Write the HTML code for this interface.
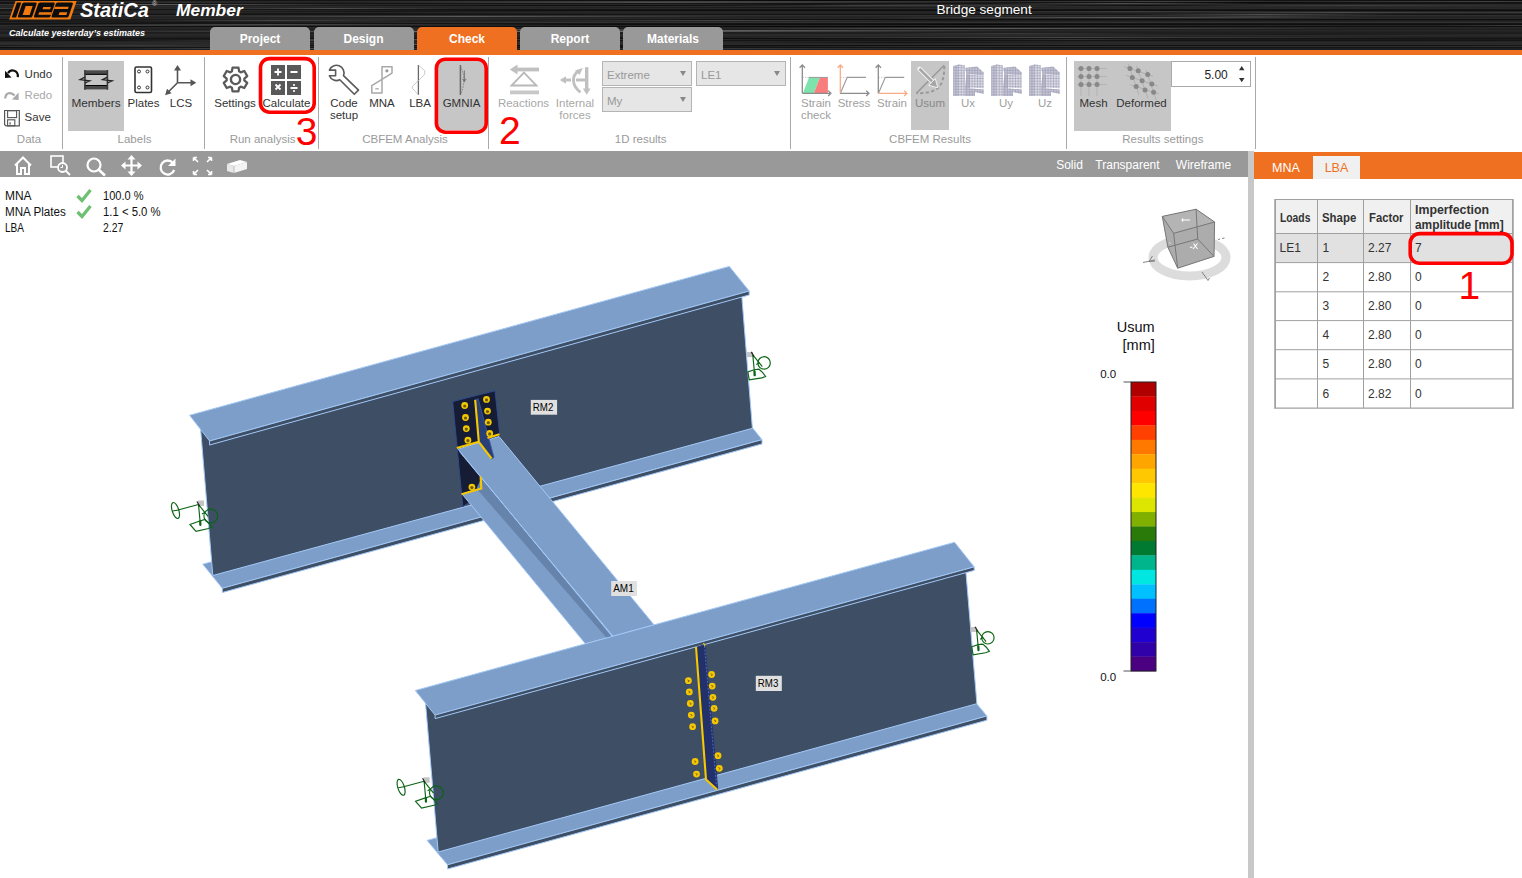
<!DOCTYPE html>
<html><head><meta charset="utf-8">
<style>
*{margin:0;padding:0;box-sizing:border-box}
html,body{width:1522px;height:878px;overflow:hidden;background:#fff;font-family:"Liberation Sans",sans-serif;}
.a{position:absolute;white-space:nowrap}
#hdr{position:absolute;left:0;top:0;width:1522px;height:50px;
 background:
 repeating-linear-gradient(180deg,rgba(255,255,255,0) 0px,rgba(255,255,255,0) 2px,rgba(255,255,255,.08) 3px,rgba(255,255,255,0) 4px,rgba(0,0,0,0) 5px,rgba(0,0,0,.3) 6px,rgba(255,255,255,.05) 7px),
 #1c1c1c;}
#obar{position:absolute;left:0;top:50px;width:1522px;height:5px;background:#f07021}
.tab{position:absolute;top:27px;width:100px;height:23px;background:#999;border-radius:5px 5px 0 0;color:#fff;font-weight:bold;font-size:12px;text-align:center;line-height:24px}
.tab.on{background:#f07021}
#rib{position:absolute;left:0;top:55px;width:1522px;height:96px;background:#fff}
.sep{position:absolute;top:57px;width:1px;height:92px;background:#a0a0a0}
.glbl{position:absolute;top:133px;color:#999;font-size:11.5px;text-align:center}
.btxt{position:absolute;font-size:11.5px;color:#333;text-align:center;line-height:12px}
.dis{color:#a0a0a0}
.hl{position:absolute;background:#c6c6c6}
#vtb{position:absolute;left:0;top:151px;width:1248px;height:26px;background:#999}
#split{position:absolute;left:1248px;top:151px;width:6px;height:727px;background:#c8c8c8}
#rhdr{position:absolute;left:1254px;top:152px;width:268px;height:27px;background:#f07021}
.combo{position:absolute;height:25px;background:#e6e6e6;border:1px solid #b4b4b4;color:#999;font-size:11.5px;line-height:26px;padding-left:4px}
.combo:after{content:"";position:absolute;right:5px;top:9px;border-left:3.5px solid transparent;border-right:3.5px solid transparent;border-top:5px solid #888}
.stat{position:absolute;font-size:12px;color:#111;line-height:16px}
.red{position:absolute;border:3px solid #f00;border-radius:10px}
.num{position:absolute;color:#f00;font-size:34px;line-height:34px}
table{border-collapse:collapse}
</style></head><body>
<div id="hdr"></div>
<svg class="a" style="left:0;top:0" width="1522" height="50" viewBox="0 0 1522 50"><defs><linearGradient id="sl"><stop offset="0" stop-color="#fff" stop-opacity="0"/><stop offset="0.5" stop-color="#fff" stop-opacity="1"/><stop offset="1" stop-color="#fff" stop-opacity="0"/></linearGradient><linearGradient id="sd"><stop offset="0" stop-color="#000" stop-opacity="0"/><stop offset="0.5" stop-color="#000" stop-opacity="1"/><stop offset="1" stop-color="#000" stop-opacity="0"/></linearGradient></defs><rect x="0" y="0" width="1522" height="1" fill="rgb(20,20,20)"/><rect x="0" y="1" width="1522" height="1" fill="rgb(40,40,40)"/><rect x="0" y="2" width="1522" height="1" fill="rgb(20,20,20)"/><rect x="0" y="3" width="1522" height="1" fill="rgb(20,20,20)"/><rect x="0" y="4" width="1522" height="1" fill="rgb(40,40,40)"/><rect x="0" y="5" width="1522" height="1" fill="rgb(36,36,36)"/><rect x="0" y="6" width="1522" height="1" fill="rgb(42,42,42)"/><rect x="0" y="7" width="1522" height="1" fill="rgb(38,38,38)"/><rect x="0" y="8" width="1522" height="1" fill="rgb(40,40,40)"/><rect x="0" y="9" width="1522" height="1" fill="rgb(20,20,20)"/><rect x="0" y="10" width="1522" height="1" fill="rgb(15,15,15)"/><rect x="0" y="11" width="1522" height="1" fill="rgb(36,36,36)"/><rect x="0" y="12" width="1522" height="1" fill="rgb(38,38,38)"/><rect x="0" y="13" width="1522" height="1" fill="rgb(34,34,34)"/><rect x="0" y="14" width="1522" height="1" fill="rgb(20,20,20)"/><rect x="0" y="15" width="1522" height="1" fill="rgb(46,46,46)"/><rect x="0" y="16" width="1522" height="1" fill="rgb(38,38,38)"/><rect x="0" y="17" width="1522" height="1" fill="rgb(34,34,34)"/><rect x="0" y="18" width="1522" height="1" fill="rgb(40,40,40)"/><rect x="0" y="19" width="1522" height="1" fill="rgb(15,15,15)"/><rect x="0" y="20" width="1522" height="1" fill="rgb(30,30,30)"/><rect x="0" y="21" width="1522" height="1" fill="rgb(36,36,36)"/><rect x="0" y="22" width="1522" height="1" fill="rgb(50,50,50)"/><rect x="0" y="23" width="1522" height="1" fill="rgb(20,20,20)"/><rect x="0" y="24" width="1522" height="1" fill="rgb(15,15,15)"/><rect x="0" y="25" width="1522" height="1" fill="rgb(36,36,36)"/><rect x="0" y="26" width="1522" height="1" fill="rgb(15,15,15)"/><rect x="0" y="27" width="1522" height="1" fill="rgb(38,38,38)"/><rect x="0" y="28" width="1522" height="1" fill="rgb(36,36,36)"/><rect x="0" y="29" width="1522" height="1" fill="rgb(30,30,30)"/><rect x="0" y="30" width="1522" height="1" fill="rgb(40,40,40)"/><rect x="0" y="31" width="1522" height="1" fill="rgb(34,34,34)"/><rect x="0" y="32" width="1522" height="1" fill="rgb(30,30,30)"/><rect x="0" y="33" width="1522" height="1" fill="rgb(30,30,30)"/><rect x="0" y="34" width="1522" height="1" fill="rgb(42,42,42)"/><rect x="0" y="35" width="1522" height="1" fill="rgb(42,42,42)"/><rect x="0" y="36" width="1522" height="1" fill="rgb(36,36,36)"/><rect x="0" y="37" width="1522" height="1" fill="rgb(30,30,30)"/><rect x="0" y="38" width="1522" height="1" fill="rgb(20,20,20)"/><rect x="0" y="39" width="1522" height="1" fill="rgb(26,26,26)"/><rect x="0" y="40" width="1522" height="1" fill="rgb(20,20,20)"/><rect x="0" y="41" width="1522" height="1" fill="rgb(36,36,36)"/><rect x="0" y="42" width="1522" height="1" fill="rgb(42,42,42)"/><rect x="0" y="43" width="1522" height="1" fill="rgb(40,40,40)"/><rect x="0" y="44" width="1522" height="1" fill="rgb(42,42,42)"/><rect x="0" y="45" width="1522" height="1" fill="rgb(15,15,15)"/><rect x="0" y="46" width="1522" height="1" fill="rgb(46,46,46)"/><rect x="0" y="47" width="1522" height="1" fill="rgb(20,20,20)"/><rect x="0" y="48" width="1522" height="1" fill="rgb(30,30,30)"/><rect x="0" y="49" width="1522" height="1" fill="rgb(15,15,15)"/><rect x="636" y="5" width="434" height="1" fill="url(#sl)" opacity="0.25"/><rect x="1149" y="5" width="410" height="1" fill="url(#sl)" opacity="0.12"/><rect x="291" y="32" width="180" height="1" fill="url(#sl)" opacity="0.12"/><rect x="-80" y="25" width="447" height="1" fill="url(#sl)" opacity="0.12"/><rect x="-299" y="43" width="368" height="1" fill="url(#sl)" opacity="0.12"/><rect x="468" y="30" width="556" height="1" fill="url(#sl)" opacity="0.25"/><rect x="106" y="40" width="426" height="1" fill="url(#sl)" opacity="0.18"/><rect x="-269" y="21" width="569" height="1" fill="url(#sd)" opacity="0.4"/><rect x="204" y="8" width="253" height="1" fill="url(#sl)" opacity="0.18"/><rect x="63" y="31" width="722" height="1" fill="url(#sl)" opacity="0.25"/><rect x="1198" y="12" width="284" height="1" fill="url(#sl)" opacity="0.18"/><rect x="508" y="7" width="580" height="1" fill="url(#sd)" opacity="0.4"/><rect x="1470" y="17" width="756" height="1" fill="url(#sl)" opacity="0.12"/><rect x="83" y="13" width="553" height="1" fill="url(#sd)" opacity="0.4"/><rect x="-1" y="2" width="368" height="1" fill="url(#sl)" opacity="0.12"/><rect x="373" y="39" width="453" height="1" fill="url(#sl)" opacity="0.12"/><rect x="127" y="5" width="746" height="1" fill="url(#sd)" opacity="0.4"/><rect x="455" y="38" width="530" height="1" fill="url(#sd)" opacity="0.4"/><rect x="690" y="37" width="738" height="1" fill="url(#sl)" opacity="0.18"/><rect x="984" y="11" width="307" height="1" fill="url(#sl)" opacity="0.12"/><rect x="210" y="39" width="344" height="1" fill="url(#sl)" opacity="0.25"/><rect x="102" y="35" width="547" height="1" fill="url(#sd)" opacity="0.4"/><rect x="-203" y="26" width="256" height="1" fill="url(#sl)" opacity="0.25"/><rect x="188" y="16" width="551" height="1" fill="url(#sl)" opacity="0.25"/><rect x="300" y="31" width="682" height="1" fill="url(#sl)" opacity="0.25"/><rect x="-42" y="4" width="383" height="1" fill="url(#sl)" opacity="0.25"/><rect x="958" y="39" width="225" height="1" fill="url(#sl)" opacity="0.12"/><rect x="-267" y="47" width="220" height="1" fill="url(#sl)" opacity="0.18"/><rect x="-177" y="15" width="197" height="1" fill="url(#sl)" opacity="0.18"/><rect x="871" y="33" width="284" height="1" fill="url(#sl)" opacity="0.12"/><rect x="377" y="28" width="684" height="1" fill="url(#sd)" opacity="0.4"/><rect x="-229" y="37" width="168" height="1" fill="url(#sl)" opacity="0.18"/><rect x="338" y="44" width="184" height="1" fill="url(#sl)" opacity="0.25"/><rect x="687" y="4" width="218" height="1" fill="url(#sd)" opacity="0.6"/><rect x="-152" y="8" width="227" height="1" fill="url(#sl)" opacity="0.18"/><rect x="-209" y="47" width="282" height="1" fill="url(#sd)" opacity="0.6"/><rect x="-127" y="22" width="634" height="1" fill="url(#sd)" opacity="0.6"/><rect x="1468" y="1" width="661" height="1" fill="url(#sd)" opacity="0.6"/><rect x="893" y="24" width="162" height="1" fill="url(#sd)" opacity="0.4"/><rect x="1009" y="5" width="268" height="1" fill="url(#sd)" opacity="0.6"/><rect x="376" y="46" width="547" height="1" fill="url(#sd)" opacity="0.6"/><rect x="647" y="28" width="704" height="1" fill="url(#sl)" opacity="0.25"/><rect x="335" y="1" width="765" height="1" fill="url(#sl)" opacity="0.12"/><rect x="1130" y="14" width="265" height="1" fill="url(#sl)" opacity="0.25"/><rect x="695" y="42" width="411" height="1" fill="url(#sd)" opacity="0.6"/><rect x="-7" y="19" width="776" height="1" fill="url(#sl)" opacity="0.12"/><rect x="401" y="48" width="602" height="1" fill="url(#sl)" opacity="0.12"/><rect x="528" y="20" width="406" height="1" fill="url(#sl)" opacity="0.18"/><rect x="110" y="48" width="369" height="1" fill="url(#sl)" opacity="0.25"/><rect x="129" y="20" width="289" height="1" fill="url(#sl)" opacity="0.18"/><rect x="1156" y="2" width="215" height="1" fill="url(#sd)" opacity="0.6"/><rect x="-69" y="10" width="611" height="1" fill="url(#sl)" opacity="0.12"/><rect x="483" y="26" width="790" height="1" fill="url(#sd)" opacity="0.6"/><rect x="1418" y="45" width="789" height="1" fill="url(#sl)" opacity="0.12"/><rect x="269" y="2" width="772" height="1" fill="url(#sl)" opacity="0.25"/><rect x="868" y="17" width="512" height="1" fill="url(#sl)" opacity="0.25"/><rect x="1012" y="1" width="289" height="1" fill="url(#sl)" opacity="0.12"/><rect x="1275" y="1" width="422" height="1" fill="url(#sl)" opacity="0.12"/><rect x="988" y="3" width="268" height="1" fill="url(#sl)" opacity="0.25"/><rect x="1041" y="34" width="527" height="1" fill="url(#sd)" opacity="0.4"/><rect x="1387" y="12" width="636" height="1" fill="url(#sl)" opacity="0.25"/><rect x="1246" y="0" width="633" height="1" fill="url(#sd)" opacity="0.4"/><rect x="163" y="11" width="428" height="1" fill="url(#sd)" opacity="0.4"/><rect x="1438" y="25" width="379" height="1" fill="url(#sl)" opacity="0.25"/><rect x="-34" y="24" width="611" height="1" fill="url(#sl)" opacity="0.25"/><rect x="471" y="0" width="713" height="1" fill="url(#sd)" opacity="0.6"/><rect x="368" y="29" width="359" height="1" fill="url(#sl)" opacity="0.25"/><rect x="-48" y="45" width="368" height="1" fill="url(#sl)" opacity="0.18"/><rect x="334" y="5" width="699" height="1" fill="url(#sd)" opacity="0.6"/><rect x="1171" y="16" width="166" height="1" fill="url(#sl)" opacity="0.12"/><rect x="0" y="49" width="1522" height="1" fill="#1a2026"/></svg>
<div id="obar"></div>
<div class="tab" style="left:210px">Project</div>
<div class="tab" style="left:313.5px">Design</div>
<div class="tab on" style="left:417px">Check</div>
<div class="tab" style="left:520px">Report</div>
<div class="tab" style="left:623px">Materials</div>
<div class="a" style="left:936.5px;top:2px;color:#fff;font-size:13.6px">Bridge segment</div>

<div id="rib"></div>
<div id="vtb"></div>
<div id="split"></div>
<div id="rhdr"></div>
<svg class="a" style="left:0;top:0" width="1248" height="878" viewBox="0 0 1248 878"><polygon points="202.8,564.2 742.6,415.5 762.0,439.7 222.3,588.3" fill="#7d9ec9" stroke="#a3c8f5" stroke-width="1"/><polygon points="222.3,588.3 762.0,439.7 762.0,443.9 222.3,592.5" fill="#3e4e65" stroke="#a3c8f5" stroke-width="1"/><polygon points="200.5,428.0 740.5,280.0 752.4,428.3 212.8,575.5" fill="#3e4e65" stroke="#a3c8f5" stroke-width="1"/><polygon points="452.7,401.5 495.0,390.8 500.0,437.0 505.0,480.0 462.8,506.5" fill="#151c34" stroke="#2e4a8a" stroke-width="1"/><polygon points="462.1,494.0 503.0,481.3 627.2,632.3 585.4,643.8" fill="#7d9ec9" stroke="#a3c8f5" stroke-width="1"/><polygon points="476.5,488.5 481.5,477.6 612.2,636.4 606.7,637.9" fill="#6583ab"/><polygon points="458.1,449.2 499.0,436.5 654.1,624.9 612.2,636.4" fill="#7d9ec9" stroke="#a3c8f5" stroke-width="1"/><path d="M459.6,451.7 L613.1733176136148,636.399080900542" stroke="#a3c8f5" stroke-width="1"/><polygon points="474.8,399.5 478.2,398.8 494.0,457.5 491.0,459.0 478.9,442.0" fill="#2a3f75" stroke="#3b5aa0" stroke-width="0.8"/><path d="M456.8,448 L478.8,441.8 L475.2,400 M478.8,441.8 L491.5,458.5 M487.5,438 L499.5,434.2 M480.6,476.5 L481.3,488.5 L461.5,494.2" fill="none" stroke="#f5c800" stroke-width="2.1"/><circle cx="464.7" cy="405.5" r="3.4" fill="#f5c800"/><circle cx="464.7" cy="406.0" r="1.6" fill="#6e5a00"/><circle cx="465.5" cy="417.5" r="3.4" fill="#f5c800"/><circle cx="465.5" cy="418.0" r="1.6" fill="#6e5a00"/><circle cx="466.3" cy="428.6" r="3.4" fill="#f5c800"/><circle cx="466.3" cy="429.1" r="1.6" fill="#6e5a00"/><circle cx="467.9" cy="440.2" r="3.4" fill="#f5c800"/><circle cx="467.9" cy="440.7" r="1.6" fill="#6e5a00"/><circle cx="486.5" cy="399.4" r="3.4" fill="#f5c800"/><circle cx="486.5" cy="399.9" r="1.6" fill="#6e5a00"/><circle cx="487.5" cy="411.1" r="3.4" fill="#f5c800"/><circle cx="487.5" cy="411.6" r="1.6" fill="#6e5a00"/><circle cx="488.3" cy="422.2" r="3.4" fill="#f5c800"/><circle cx="488.3" cy="422.7" r="1.6" fill="#6e5a00"/><circle cx="489.7" cy="433.4" r="3.4" fill="#f5c800"/><circle cx="489.7" cy="433.9" r="1.6" fill="#6e5a00"/><circle cx="471.9" cy="487.1" r="3.4" fill="#f5c800"/><circle cx="471.9" cy="487.6" r="1.6" fill="#6e5a00"/><polygon points="189.6,415.3 729.3,266.4 749.2,291.0 209.6,441.0" fill="#7d9ec9" stroke="#a3c8f5" stroke-width="1"/><polygon points="209.6,441.0 749.2,291.0 749.2,295.0 209.6,445.0" fill="#3e4e65" stroke="#a3c8f5" stroke-width="1"/><polygon points="427.1,840.4 966.9,692.0 986.9,716.0 447.5,864.8" fill="#7d9ec9" stroke="#a3c8f5" stroke-width="1"/><polygon points="447.5,864.8 986.9,716.0 986.9,720.2 447.5,869.0" fill="#3e4e65" stroke="#a3c8f5" stroke-width="1"/><polygon points="425.5,703.0 964.5,555.0 976.9,703.7 438.2,852.0" fill="#3e4e65" stroke="#a3c8f5" stroke-width="1"/><polygon points="415.3,690.5 954.6,542.3 974.2,566.9 435.1,715.1" fill="#7d9ec9" stroke="#a3c8f5" stroke-width="1"/><polygon points="435.1,715.1 974.2,566.9 974.2,570.4 435.1,718.6" fill="#3e4e65" stroke="#a3c8f5" stroke-width="1"/><polygon points="695.8,647.5 704.8,644.5 717.8,789.0 706.3,779.0" fill="#22316a" stroke="#22316a" stroke-width="0.8"/><path d="M704.5,646 L716.5,786" stroke="#4a6ac0" stroke-width="1" stroke-dasharray="2,1.5"/><path d="M696,647 L706,779.5 L717,789.5" fill="none" stroke="#f5c800" stroke-width="2.1"/><path d="M703.5,643 L705,646" stroke="#f5c800" stroke-width="1.2"/><circle cx="688.4" cy="680.7" r="3.4" fill="#f5c800"/><path d="M687.4,679.9000000000001 L689.4,680.9000000000001 L687.9,681.9000000000001" fill="none" stroke="#8a6e00" stroke-width="1"/><circle cx="689.3" cy="691.9" r="3.4" fill="#f5c800"/><path d="M688.3,691.1 L690.3,692.1 L688.8,693.1" fill="none" stroke="#8a6e00" stroke-width="1"/><circle cx="690.3" cy="703.5" r="3.4" fill="#f5c800"/><path d="M689.3,702.7 L691.3,703.7 L689.8,704.7" fill="none" stroke="#8a6e00" stroke-width="1"/><circle cx="691.3" cy="715.1" r="3.4" fill="#f5c800"/><path d="M690.3,714.3000000000001 L692.3,715.3000000000001 L690.8,716.3000000000001" fill="none" stroke="#8a6e00" stroke-width="1"/><circle cx="692.6" cy="726.7" r="3.4" fill="#f5c800"/><path d="M691.6,725.9000000000001 L693.6,726.9000000000001 L692.1,727.9000000000001" fill="none" stroke="#8a6e00" stroke-width="1"/><circle cx="695.1" cy="761.5" r="3.4" fill="#f5c800"/><path d="M694.1,760.7 L696.1,761.7 L694.6,762.7" fill="none" stroke="#8a6e00" stroke-width="1"/><circle cx="696.5" cy="774.1" r="3.4" fill="#f5c800"/><path d="M695.5,773.3000000000001 L697.5,774.3000000000001 L696.0,775.3000000000001" fill="none" stroke="#8a6e00" stroke-width="1"/><circle cx="711.6" cy="674.5" r="3.4" fill="#f5c800"/><path d="M710.6,673.7 L712.6,674.7 L711.1,675.7" fill="none" stroke="#8a6e00" stroke-width="1"/><circle cx="712.2" cy="686.1" r="3.4" fill="#f5c800"/><path d="M711.2,685.3000000000001 L713.2,686.3000000000001 L711.7,687.3000000000001" fill="none" stroke="#8a6e00" stroke-width="1"/><circle cx="712.9" cy="697.3" r="3.4" fill="#f5c800"/><path d="M711.9,696.5 L713.9,697.5 L712.4,698.5" fill="none" stroke="#8a6e00" stroke-width="1"/><circle cx="714.1" cy="708.3" r="3.4" fill="#f5c800"/><path d="M713.1,707.5 L715.1,708.5 L713.6,709.5" fill="none" stroke="#8a6e00" stroke-width="1"/><circle cx="715.1" cy="720.9" r="3.4" fill="#f5c800"/><path d="M714.1,720.1 L716.1,721.1 L714.6,722.1" fill="none" stroke="#8a6e00" stroke-width="1"/><circle cx="718" cy="755.7" r="3.4" fill="#f5c800"/><path d="M717,754.9000000000001 L719,755.9000000000001 L717.5,756.9000000000001" fill="none" stroke="#8a6e00" stroke-width="1"/><circle cx="719.3" cy="768.3" r="3.4" fill="#f5c800"/><path d="M718.3,767.5 L720.3,768.5 L718.8,769.5" fill="none" stroke="#8a6e00" stroke-width="1"/><rect x="530.8" y="399.9" width="26.300000000000068" height="14.800000000000011" fill="#e0e0e0"/><text x="532.8" y="411.09999999999997" font-size="10.8" textLength="20.5" lengthAdjust="spacingAndGlyphs" fill="#000" font-family="Liberation Sans">RM2</text><rect x="611.2" y="581" width="25.799999999999955" height="15" fill="#e0e0e0"/><text x="613.2" y="592.4" font-size="10.8" textLength="20.5" lengthAdjust="spacingAndGlyphs" fill="#000" font-family="Liberation Sans">AM1</text><rect x="755.8" y="675.8" width="26.0" height="15.200000000000045" fill="#e0e0e0"/><text x="757.8" y="687.4" font-size="10.8" textLength="20.5" lengthAdjust="spacingAndGlyphs" fill="#000" font-family="Liberation Sans">RM3</text><rect x="198.0" y="500.5" width="6" height="5.5" fill="#c4c4c4"/><g transform="translate(198.5,504.5)" fill="none" stroke="#0b6414" stroke-width="1.15"><path d="M0,0 L2,21.3 M0,0 L9.5,11.8 M3.5,9.5 L7,7.5"/><path d="M1.7,16 L1.9,21" stroke-width="2.2"/><circle cx="12.3" cy="11.5" r="6.9"/><path d="M-8.5,20 L-2.5,26.8 L10,24 L13.5,22.5 L10,18.5 L6.5,15 L0.5,16.8 Z"/><path d="M0,0 L-20.5,5.5"/><ellipse cx="-23" cy="6" rx="3.3" ry="8.3" transform="rotate(-18 -23 6)"/><path d="M-26,6.5 L-20,5.5"/></g><path d="M197.0,501.5 L199.5,506.0" stroke="#222" stroke-width="1.2"/><rect x="746.8" y="352.09999999999997" width="6" height="5" fill="#c4c4c4"/><g transform="translate(752.8,354.9)" fill="none" stroke="#0b6414" stroke-width="1.15"><path d="M0,0 L2,21.3 M0,0 L9.5,11.8 M3.5,9.5 L7,7.5"/><path d="M1.7,16 L1.9,21" stroke-width="2.2"/><circle cx="11.3" cy="8" r="6.2"/><path d="M-5,17 L-3.5,25 L9,23 L12.8,21.5 L9.7,17.4 L6.2,14.3 L1.5,14.8 Z"/></g><path d="M751.3,351.9 L753.8,356.4" stroke="#222" stroke-width="1.2"/><rect x="423.6" y="777.3" width="6" height="5.5" fill="#c4c4c4"/><g transform="translate(424.1,781.3)" fill="none" stroke="#0b6414" stroke-width="1.15"><path d="M0,0 L2,21.3 M0,0 L9.5,11.8 M3.5,9.5 L7,7.5"/><path d="M1.7,16 L1.9,21" stroke-width="2.2"/><circle cx="12.3" cy="11.5" r="6.9"/><path d="M-8.5,20 L-2.5,26.8 L10,24 L13.5,22.5 L10,18.5 L6.5,15 L0.5,16.8 Z"/><path d="M0,0 L-20.5,5.5"/><ellipse cx="-23" cy="6" rx="3.3" ry="8.3" transform="rotate(-18 -23 6)"/><path d="M-26,6.5 L-20,5.5"/></g><path d="M422.6,778.3 L425.1,782.8" stroke="#222" stroke-width="1.2"/><rect x="970.6" y="627.0" width="6" height="5" fill="#c4c4c4"/><g transform="translate(976.6,629.8)" fill="none" stroke="#0b6414" stroke-width="1.15"><path d="M0,0 L2,21.3 M0,0 L9.5,11.8 M3.5,9.5 L7,7.5"/><path d="M1.7,16 L1.9,21" stroke-width="2.2"/><circle cx="11.3" cy="8" r="6.2"/><path d="M-5,17 L-3.5,25 L9,23 L12.8,21.5 L9.7,17.4 L6.2,14.3 L1.5,14.8 Z"/></g><path d="M975.1,626.8 L977.6,631.3" stroke="#222" stroke-width="1.2"/></svg>
<div class="a" style="left:62px;top:57px;width:1px;height:92px;background:#a9a9a9"></div><div class="a" style="left:204px;top:57px;width:1px;height:92px;background:#a9a9a9"></div><div class="a" style="left:318px;top:57px;width:1px;height:92px;background:#a9a9a9"></div><div class="a" style="left:488px;top:57px;width:1px;height:92px;background:#a9a9a9"></div><div class="a" style="left:790px;top:57px;width:1px;height:92px;background:#a9a9a9"></div><div class="a" style="left:1066px;top:57px;width:1px;height:92px;background:#a9a9a9"></div><div class="a" style="left:1255px;top:57px;width:1px;height:92px;background:#a9a9a9"></div><div class="a" style="left:68px;top:61px;width:56px;height:70px;background:#c6c6c6"></div><div class="a" style="left:438px;top:60px;width:47px;height:70px;background:#c6c6c6"></div><div class="a" style="left:911px;top:61px;width:38px;height:69px;background:#c6c6c6"></div><div class="a" style="left:1074px;top:61px;width:97px;height:70px;background:#c6c6c6"></div><div class="a" style="left:-71.0px;width:200px;text-align:center;top:134.3px;font-size:11.5px;line-height:11.5px;color:#9a9a9a;">Data</div><div class="a" style="left:34.5px;width:200px;text-align:center;top:134.3px;font-size:11.5px;line-height:11.5px;color:#9a9a9a;">Labels</div><div class="a" style="left:162.6px;width:200px;text-align:center;top:134.3px;font-size:11.5px;line-height:11.5px;color:#9a9a9a;">Run analysis</div><div class="a" style="left:305.0px;width:200px;text-align:center;top:134.3px;font-size:11.5px;line-height:11.5px;color:#9a9a9a;">CBFEM Analysis</div><div class="a" style="left:540.7px;width:200px;text-align:center;top:134.3px;font-size:11.5px;line-height:11.5px;color:#9a9a9a;">1D results</div><div class="a" style="left:830.0px;width:200px;text-align:center;top:134.3px;font-size:11.5px;line-height:11.5px;color:#9a9a9a;">CBFEM Results</div><div class="a" style="left:1062.8px;width:200px;text-align:center;top:134.3px;font-size:11.5px;line-height:11.5px;color:#9a9a9a;">Results settings</div><div class="a" style="left:24.6px;top:68.5px;font-size:11.5px;line-height:11.5px;color:#333;">Undo</div><div class="a" style="left:24.6px;top:89.9px;font-size:11.5px;line-height:11.5px;color:#a8a8a8;">Redo</div><div class="a" style="left:24.6px;top:112.2px;font-size:11.5px;line-height:11.5px;color:#333;">Save</div><svg class="a" style="left:0px;top:62px;overflow:visible" width="24" height="68" viewBox="0 0 24 68" ><path d="M17.8,15.2 C18.5,8 11,6.5 8,11.2" fill="none" stroke="#111" stroke-width="2.2"/><path d="M5,70.8 L11.6,77.6 L5,78 Z" fill="#111" transform="translate(0,-62)"/><path d="M5.2,36.5 C5.5,30.5 11,29.5 14.5,33.5" fill="none" stroke="#a8a8a8" stroke-width="2.2"/><path d="M18.6,30.5 L12,37.5 L18.6,38 Z" fill="#a8a8a8"/><path d="M4.6,48.5 H19.3 V63.8 H6 L4.6,62.4 Z" fill="none" stroke="#555" stroke-width="1.2"/><rect x="7.6" y="48.8" width="9" height="6.8" fill="none" stroke="#555" stroke-width="1.1"/><rect x="7.6" y="57.8" width="7.2" height="6" fill="none" stroke="#555" stroke-width="1.1"/><rect x="9.4" y="60.2" width="1.4" height="2.4" fill="#777"/></svg><div class="a" style="left:-4.0px;width:200px;text-align:center;top:98.0px;font-size:11.8px;line-height:11.8px;color:#333;">Members</div><div class="a" style="left:43.5px;width:200px;text-align:center;top:98.3px;font-size:11.5px;line-height:11.5px;color:#333;">Plates</div><div class="a" style="left:81.0px;width:200px;text-align:center;top:98.3px;font-size:11.5px;line-height:11.5px;color:#333;">LCS</div><svg class="a" style="left:76px;top:64px;overflow:visible" width="40" height="30" viewBox="0 0 40 30" ><rect x="8.4" y="6.3" width="23.4" height="4.5" fill="#4a4a4a"/><rect x="8.4" y="9.8" width="23.4" height="1" fill="#000"/><rect x="8.4" y="21" width="23.4" height="4.4" fill="#4a4a4a"/><rect x="8.4" y="21" width="23.4" height="1" fill="#000"/><rect x="8.2" y="6" width="1.6" height="19.7" fill="#3a3a3a"/><rect x="30.6" y="6" width="1.6" height="19.7" fill="#3a3a3a"/><path d="M9,13.2 L4.2,15.6 L13.8,16.8 L9,19 M31.4,13.2 L26.6,15.6 L36.2,16.8 L31.4,19" fill="none" stroke="#222" stroke-width="1.3" stroke-linejoin="miter"/></svg><svg class="a" style="left:134px;top:66px;overflow:visible" width="19" height="28" viewBox="0 0 19 28" ><rect x="1" y="1" width="16.5" height="25.5" rx="1.5" fill="none" stroke="#333" stroke-width="1.6"/><circle cx="5" cy="5.5" r="1.5" fill="none" stroke="#333" stroke-width="1"/><circle cx="13.5" cy="5.5" r="1.5" fill="none" stroke="#333" stroke-width="1"/><circle cx="5" cy="21.5" r="1.5" fill="none" stroke="#333" stroke-width="1"/><circle cx="13.5" cy="21.5" r="1.5" fill="none" stroke="#333" stroke-width="1"/></svg><svg class="a" style="left:164px;top:62.8px;overflow:visible" width="34" height="34" viewBox="0 0 34 34" ><path d="M13.5,19.8 V6 M13.5,19.8 H28 M13.5,19.8 L4.5,28.8" stroke="#555" stroke-width="1.6" fill="none"/><path d="M13.5,1.9 L10,7.5 H17 Z M32.3,19.8 L26.5,16.3 V23.3 Z M1.1,32.2 L3,25.8 L7.5,30.3 Z" fill="#555"/></svg><div class="a" style="left:135.0px;width:200px;text-align:center;top:98.3px;font-size:11.5px;line-height:11.5px;color:#333;">Settings</div><div class="a" style="left:186.5px;width:200px;text-align:center;top:98.3px;font-size:11.5px;line-height:11.5px;color:#333;">Calculate</div><svg class="a" style="left:221.5px;top:66.3px;overflow:visible" width="27" height="27" viewBox="0 0 27 27" ><path d="M9.88,5.37 L10.55,1.66 L16.45,1.66 L17.12,5.37 L18.73,6.30 L22.28,5.03 L25.23,10.14 L22.35,12.57 L22.35,14.43 L25.23,16.86 L22.28,21.97 L18.73,20.70 L17.12,21.63 L16.45,25.34 L10.55,25.34 L9.88,21.63 L8.27,20.70 L4.72,21.97 L1.77,16.86 L4.65,14.43 L4.65,12.57 L1.77,10.14 L4.72,5.03 L8.27,6.30 Z" fill="none" stroke="#5a5a5a" stroke-width="2.3" stroke-linejoin="round"/><circle cx="13.5" cy="13.5" r="4.6" fill="none" stroke="#5a5a5a" stroke-width="2.4"/></svg><svg class="a" style="left:271px;top:65px;overflow:visible" width="30" height="30" viewBox="0 0 30 30" ><rect x="0" y="0" width="14" height="14" fill="#595959"/><rect x="16" y="0" width="14" height="14" fill="#595959"/><rect x="0" y="16" width="14" height="14" fill="#595959"/><rect x="16" y="16" width="14" height="14" fill="#595959"/><path d="M3.5,7 H10.5 M7,3.5 V10.5 M19.5,7 H26.5 M4.5,19.5 L9.5,24.5 M9.5,19.5 L4.5,24.5 M19.5,23 H26.5" stroke="#fff" stroke-width="1.8"/><circle cx="23" cy="20" r="1.1" fill="#fff"/><circle cx="23" cy="26" r="1.1" fill="#fff"/></svg><div class="a" style="left:244.0px;width:200px;text-align:center;top:98.3px;font-size:11.5px;line-height:11.5px;color:#333;">Code</div><div class="a" style="left:244.0px;width:200px;text-align:center;top:110.3px;font-size:11.5px;line-height:11.5px;color:#333;">setup</div><div class="a" style="left:282.0px;width:200px;text-align:center;top:98.3px;font-size:11.5px;line-height:11.5px;color:#333;">MNA</div><div class="a" style="left:320.0px;width:200px;text-align:center;top:98.3px;font-size:11.5px;line-height:11.5px;color:#333;">LBA</div><div class="a" style="left:361.5px;width:200px;text-align:center;top:98.3px;font-size:11.5px;line-height:11.5px;color:#333;">GMNIA</div><svg class="a" style="left:325px;top:60px;overflow:visible" width="70" height="37" viewBox="0 0 70 37" ><path d="M4.4,10.1 L10.6,10.1 L10.6,15.8 L4.4,15.8 A7.4,7.4 0 0 0 14.8,19.7 L29.3,34.3 L33.5,30.1 L18.5,15.6 A7.4,7.4 0 0 0 4.4,10.1 Z" fill="none" stroke="#5a5a5a" stroke-width="1.6" stroke-linejoin="round"/><path d="M57,6.7 H67 V13.1 L46.8,25.6 V33 H57 Z" fill="none" stroke="#a8a8a8" stroke-width="1.5" stroke-linejoin="round"/><circle cx="61.9" cy="10.8" r="1.6" fill="#999"/><path d="M50.3,28.8 H53.8" stroke="#aaa" stroke-width="1.3"/></svg><svg class="a" style="left:410px;top:64px;overflow:visible" width="16" height="32" viewBox="0 0 16 32" ><path d="M8.4,1 V31" stroke="#6a6a6a" stroke-width="1.3"/><path d="M8.4,1.1 L14.7,6.6 V10.3 L8.4,16.6 L2.3,22.6 V24.2 L8.4,30.8" fill="none" stroke="#bdbdbd" stroke-width="0.8"/></svg><svg class="a" style="left:456px;top:62px;overflow:visible" width="14" height="36" viewBox="0 0 14 36" ><path d="M4.4,3 V33" stroke="#6a6a6a" stroke-width="1.5"/><path d="M4.6,4 C7,10 8,15 8,18 C8,22 6.5,28 4.6,32.5" fill="none" stroke="#7a7a7a" stroke-width="0.8" stroke-dasharray="1.6,1"/><path d="M8.3,8.5 V20 M6.6,16.8 L8.3,19.5 L10.2,16.8" fill="none" stroke="#666" stroke-width="0.9"/></svg><div class="a" style="left:423.5px;width:200px;text-align:center;top:98.3px;font-size:11.5px;line-height:11.5px;color:#a8a8a8;">Reactions</div><div class="a" style="left:475.0px;width:200px;text-align:center;top:98.3px;font-size:11.5px;line-height:11.5px;color:#a8a8a8;">Internal</div><div class="a" style="left:475.0px;width:200px;text-align:center;top:110.3px;font-size:11.5px;line-height:11.5px;color:#a8a8a8;">forces</div><svg class="a" style="left:509px;top:65px;overflow:visible" width="31" height="30" viewBox="0 0 31 30" ><path d="M30,4.5 H7" stroke="#c0c0c0" stroke-width="3.8"/><path d="M0.8,4.5 L8.5,-0.5 V9.5 Z" fill="#c0c0c0"/><path d="M15,7.6 L27.5,20.5 H2.5 Z" fill="none" stroke="#b8b8b8" stroke-width="1.8"/><rect x="1" y="25.5" width="29" height="3.8" fill="#c8c8c8"/></svg><svg class="a" style="left:559px;top:65px;overflow:visible" width="34" height="32" viewBox="0 0 34 32" ><path d="M27.7,2.2 V24" stroke="#c0c0c0" stroke-width="3.4"/><path d="M23.8,23.5 H31.6 L27.7,29.8 Z" fill="#c0c0c0"/><path d="M26.2,15 H6" stroke="#c0c0c0" stroke-width="3"/><path d="M0.8,15 L7,11.3 V18.7 Z" fill="#c0c0c0"/><path d="M21.5,27.3 C13,21 12,11 19.5,6" fill="none" stroke="#fff" stroke-width="5"/><path d="M21.5,27.3 C13,21 12,11 19.5,6" fill="none" stroke="#c0c0c0" stroke-width="2.8"/><path d="M15.9,5.5 L23.8,2.9 L20.5,10.1 Z" fill="#c0c0c0"/></svg><div class="combo a" style="left:602px;top:61px;width:90px">Extreme</div><div class="combo a" style="left:602px;top:87px;width:90px">My</div><div class="combo a" style="left:696px;top:61px;width:90px">LE1</div><div class="a" style="left:716.0px;width:200px;text-align:center;top:98.3px;font-size:11.5px;line-height:11.5px;color:#a0a0a0;">Strain</div><div class="a" style="left:716.0px;width:200px;text-align:center;top:110.3px;font-size:11.5px;line-height:11.5px;color:#a0a0a0;">check</div><div class="a" style="left:754.0px;width:200px;text-align:center;top:98.3px;font-size:11.5px;line-height:11.5px;color:#a0a0a0;">Stress</div><div class="a" style="left:792.0px;width:200px;text-align:center;top:98.3px;font-size:11.5px;line-height:11.5px;color:#a0a0a0;">Strain</div><div class="a" style="left:830.0px;width:200px;text-align:center;top:98.3px;font-size:11.5px;line-height:11.5px;color:#888;">Usum</div><div class="a" style="left:868.0px;width:200px;text-align:center;top:98.3px;font-size:11.5px;line-height:11.5px;color:#a0a0a0;">Ux</div><div class="a" style="left:906.0px;width:200px;text-align:center;top:98.3px;font-size:11.5px;line-height:11.5px;color:#a0a0a0;">Uy</div><div class="a" style="left:945.0px;width:200px;text-align:center;top:98.3px;font-size:11.5px;line-height:11.5px;color:#a0a0a0;">Uz</div><svg class="a" style="left:800px;top:64px;overflow:visible" width="33" height="34" viewBox="0 0 33 34" ><path d="M2.9,29.3 L9,13.4 H19.9 L13.9,29.3 Z" fill="#7de2ac"/><path d="M13.9,29.3 L19.9,13.4 H27.9 V29.3 Z" fill="#fa7d7d"/><path d="M9,13.4 H27.9" stroke="#999" stroke-width="1"/><path d="M2.5,13.4 H9" stroke="#bbb" stroke-width="0.9" stroke-dasharray="1.3,1.3"/><path d="M2.3,29.3 V1.2 M-0.4,3.7 L2.3,1 L5,3.7" fill="none" stroke="#8c8c8c" stroke-width="1.3"/><path d="M2.3,29.3 H30.8 M28.2,26.6 L30.9,29.3 L28.2,32" fill="none" stroke="#8c8c8c" stroke-width="1.3"/></svg><svg class="a" style="left:838px;top:64px;overflow:visible" width="33" height="34" viewBox="0 0 33 34" ><path d="M2.4,29.3 L9.2,13.4 H28" fill="none" stroke="#999" stroke-width="1.1"/><path d="M2.5,13.4 H9" stroke="#c4c4c4" stroke-width="0.9" stroke-dasharray="1.3,1.3"/><path d="M2.3,29.3 V1.2 M-0.4,3.7 L2.3,1 L5,3.7" fill="none" stroke="#f6ad86" stroke-width="1.3"/><path d="M2.3,29.3 H30.8 M28.2,26.6 L30.9,29.3 L28.2,32" fill="none" stroke="#8c8c8c" stroke-width="1.3"/></svg><svg class="a" style="left:876px;top:64px;overflow:visible" width="33" height="34" viewBox="0 0 33 34" ><path d="M2.5,29.3 L9.3,13.4 H28.2" fill="none" stroke="#999" stroke-width="1.1"/><path d="M2.5,13.4 H9" stroke="#c4c4c4" stroke-width="0.9" stroke-dasharray="1.3,1.3"/><path d="M2.3,29.3 V1.2 M-0.4,3.7 L2.3,1 L5,3.7" fill="none" stroke="#8c8c8c" stroke-width="1.3"/><path d="M2.3,29.3 H30.8 M28.2,26.6 L30.9,29.3 L28.2,32" fill="none" stroke="#f6ad86" stroke-width="1.3"/></svg><svg class="a" style="left:910px;top:60px;overflow:visible" width="40" height="38" viewBox="0 0 40 38" ><path d="M6.3,33.4 L34.2,5.3" stroke="#9a9a9a" stroke-width="1.5"/><path d="M34.2,6 C34.5,14 33,24 27.5,28.5 C22,32.5 14,33.5 6.5,33.2" fill="none" stroke="#999" stroke-width="2" stroke-dasharray="3.2,2.4"/><path d="M9.5,8.9 L22,21.4" stroke="#f0f0f0" stroke-width="4.6" stroke-linecap="round"/><path d="M27.8,27.8 L25.3,18.6 L18.6,25.3 Z" fill="#a6a6a6" stroke="#f0f0f0" stroke-width="1"/><path d="M9.5,8.9 L22,21.4" stroke="#a6a6a6" stroke-width="2.6"/></svg><svg class="a" style="left:950px;top:60px;overflow:visible" width="36" height="38" viewBox="0 0 36 38" ><defs><clipPath id="mclip"><path d="M3.2,6 L9,4.6 L15,5.5 V36 H3.2 Z"/><rect x="8.5" y="5.8" width="6.5" height="30.2"/><path d="M15,8 L27,6.4 L33.7,12.5 V15.5 L16.4,13.8 Z"/><path d="M16.4,13.8 L20,14.6 V28.2 L15,28.5 Z"/><path d="M20,14.6 L33.7,16 V28.2 L20,27.5 Z"/><path d="M15,28 L33.7,29.5 V34 L25,32 V36 H15 Z"/></clipPath></defs><path d="M3.2,6 L9,4.6 L15,5.5 V36 H3.2 Z" fill="#c4c4d6"/><rect x="8.5" y="5.8" width="6.5" height="30.2" fill="#dedee8"/><path d="M15,8 L27,6.4 L33.7,12.5 V15.5 L16.4,13.8 Z" fill="#c4c4d6"/><path d="M16.4,13.8 L20,14.6 V28.2 L15,28.5 Z" fill="#bcbccc"/><path d="M20,14.6 L33.7,16 V28.2 L20,27.5 Z" fill="#dedee8"/><path d="M15,28 L33.7,29.5 V34 L25,32 V36 H15 Z" fill="#c4c4d6"/><g clip-path="url(#mclip)"><path d="M3.2,4 V36.5 M5.9,4 V36.5 M8.6,4 V36.5 M11.3,4 V36.5 M14.0,4 V36.5 M16.7,4 V36.5 M19.4,4 V36.5 M22.1,4 V36.5 M24.8,4 V36.5 M27.5,4 V36.5 M30.2,4 V36.5 M32.9,4 V36.5 M3,5.0 H34 M3,7.7 H34 M3,10.4 H34 M3,13.1 H34 M3,15.8 H34 M3,18.5 H34 M3,21.2 H34 M3,23.9 H34 M3,26.6 H34 M3,29.3 H34 M3,32.0 H34 M3,34.7 H34" stroke="#9a9ab2" stroke-width="0.55"/></g></svg><svg class="a" style="left:988px;top:60px;overflow:visible" width="36" height="38" viewBox="0 0 36 38" ><path d="M3.2,6 L9,4.6 L15,5.5 V36 H3.2 Z" fill="#c4c4d6"/><rect x="8.5" y="5.8" width="6.5" height="30.2" fill="#dedee8"/><path d="M15,8 L27,6.4 L33.7,12.5 V15.5 L16.4,13.8 Z" fill="#c4c4d6"/><path d="M16.4,13.8 L20,14.6 V28.2 L15,28.5 Z" fill="#bcbccc"/><path d="M20,14.6 L33.7,16 V28.2 L20,27.5 Z" fill="#dedee8"/><path d="M15,28 L33.7,29.5 V34 L25,32 V36 H15 Z" fill="#c4c4d6"/><g clip-path="url(#mclip)"><path d="M3.2,4 V36.5 M5.9,4 V36.5 M8.6,4 V36.5 M11.3,4 V36.5 M14.0,4 V36.5 M16.7,4 V36.5 M19.4,4 V36.5 M22.1,4 V36.5 M24.8,4 V36.5 M27.5,4 V36.5 M30.2,4 V36.5 M32.9,4 V36.5 M3,5.0 H34 M3,7.7 H34 M3,10.4 H34 M3,13.1 H34 M3,15.8 H34 M3,18.5 H34 M3,21.2 H34 M3,23.9 H34 M3,26.6 H34 M3,29.3 H34 M3,32.0 H34 M3,34.7 H34" stroke="#9a9ab2" stroke-width="0.55"/></g></svg><svg class="a" style="left:1026px;top:60px;overflow:visible" width="36" height="38" viewBox="0 0 36 38" ><path d="M3.2,6 L9,4.6 L15,5.5 V36 H3.2 Z" fill="#c4c4d6"/><rect x="8.5" y="5.8" width="6.5" height="30.2" fill="#dedee8"/><path d="M15,8 L27,6.4 L33.7,12.5 V15.5 L16.4,13.8 Z" fill="#c4c4d6"/><path d="M16.4,13.8 L20,14.6 V28.2 L15,28.5 Z" fill="#bcbccc"/><path d="M20,14.6 L33.7,16 V28.2 L20,27.5 Z" fill="#dedee8"/><path d="M15,28 L33.7,29.5 V34 L25,32 V36 H15 Z" fill="#c4c4d6"/><g clip-path="url(#mclip)"><path d="M3.2,4 V36.5 M5.9,4 V36.5 M8.6,4 V36.5 M11.3,4 V36.5 M14.0,4 V36.5 M16.7,4 V36.5 M19.4,4 V36.5 M22.1,4 V36.5 M24.8,4 V36.5 M27.5,4 V36.5 M30.2,4 V36.5 M32.9,4 V36.5 M3,5.0 H34 M3,7.7 H34 M3,10.4 H34 M3,13.1 H34 M3,15.8 H34 M3,18.5 H34 M3,21.2 H34 M3,23.9 H34 M3,26.6 H34 M3,29.3 H34 M3,32.0 H34 M3,34.7 H34" stroke="#9a9ab2" stroke-width="0.55"/></g></svg><div class="a" style="left:993.5px;width:200px;text-align:center;top:98.3px;font-size:11.5px;line-height:11.5px;color:#333;">Mesh</div><div class="a" style="left:1041.5px;width:200px;text-align:center;top:98.3px;font-size:11.5px;line-height:11.5px;color:#333;">Deformed</div><svg class="a" style="left:1076.4px;top:64.8px;overflow:visible" width="32" height="32" viewBox="0 0 32 32" ><path d="M1,3.5 H31 M1,11.5 H31 M1,19.5 H31 M5,1 V31 M13,1 V31 M21,1 V31" stroke="#aaa" stroke-width="0.7"/><circle cx="5" cy="3.5" r="2.5" fill="#888"/><circle cx="13" cy="3.5" r="2.5" fill="#888"/><circle cx="21" cy="3.5" r="2.5" fill="#888"/><circle cx="5" cy="11.5" r="2.5" fill="#888"/><circle cx="13" cy="11.5" r="2.5" fill="#888"/><circle cx="21" cy="11.5" r="2.5" fill="#888"/><circle cx="5" cy="19.5" r="2.5" fill="#888"/><circle cx="13" cy="19.5" r="2.5" fill="#888"/><circle cx="21" cy="19.5" r="2.5" fill="#888"/></svg><svg class="a" style="left:1125px;top:64px;overflow:visible" width="32" height="32" viewBox="0 0 32 32" ><path d="M-0.7,2.7 L28.0,12.3 M1.1,11.3 L32.6,21.9 M5.6,20.8 L33.8,29.9 M3.4,0.1 L14.0,30.7 M11.5,1.8 L23.0,34.6 M21.2,6.1 L31.3,36.2" stroke="#aaa" stroke-width="0.8"/><circle cx="4.95" cy="4.57" r="2.5" fill="#888"/><circle cx="13.23" cy="6.64" r="2.5" fill="#888"/><circle cx="22.7" cy="10.5" r="2.5" fill="#888"/><circle cx="7.3" cy="13.4" r="2.5" fill="#888"/><circle cx="17.1" cy="16.7" r="2.5" fill="#888"/><circle cx="26.8" cy="19.95" r="2.5" fill="#888"/><circle cx="11.2" cy="22.6" r="2.5" fill="#888"/><circle cx="20.0" cy="25.9" r="2.5" fill="#888"/><circle cx="28.6" cy="28.2" r="2.5" fill="#888"/></svg><div class="a" style="left:1171px;top:61px;width:80px;height:26px;background:#fff;border:1px solid #aaa"></div><div class="a" style="left:927.8px;width:300px;text-align:right;top:68.6px;font-size:12px;line-height:12px;color:#222;">5.00</div><svg class="a" style="left:1239px;top:66px;overflow:visible" width="6" height="17" viewBox="0 0 6 17" ><path d="M2.75,0 L5.5,4.2 H0 Z M2.75,16.3 L5.5,12.1 H0 Z" fill="#333"/></svg><svg class="a" style="left:0px;top:0px;overflow:visible" width="600" height="150" viewBox="0 0 600 150" ><rect x="260.5" y="58.6" width="53.7" height="53.6" rx="9" fill="none" stroke="#f00" stroke-width="3.6"/><rect x="436.4" y="59.2" width="49.8" height="73" rx="9" fill="none" stroke="#f00" stroke-width="3.6"/></svg><div class="a" style="left:206.5px;width:200px;text-align:center;top:112.4px;font-size:39px;line-height:39px;color:#f00;">3</div><div class="a" style="left:409.8px;width:200px;text-align:center;top:111.4px;font-size:39px;line-height:39px;color:#f00;">2</div>
<svg class="a" style="left:0px;top:0px;overflow:visible" width="80" height="21" viewBox="0 0 80 21" ><g transform="translate(15.5,1.05) skewX(-18.9)"><rect x="0" y="0" width="61.2" height="18.4" fill="#f07a10"/><rect x="1.9" y="1.55" width="4.4" height="15" fill="#0c0c0c"/><rect x="7.6" y="1.55" width="14.5" height="15" rx="1.5" fill="#0c0c0c"/><rect x="11.9" y="5" width="7" height="8.9" fill="#f07a10"/><rect x="23.7" y="1.55" width="16.5" height="15" rx="1.5" fill="#0c0c0c"/><rect x="29.8" y="6" width="7.6" height="2.1" fill="#f07a10"/><rect x="27.5" y="11.3" width="12.7" height="2.4" fill="#f07a10"/><rect x="41.3" y="1.55" width="17.1" height="15" rx="1.5" fill="#0c0c0c"/><rect x="41.3" y="5.8" width="13.9" height="2.1" fill="#f07a10"/><rect x="47.9" y="11.3" width="7.7" height="2.6" fill="#f07a10"/></g></svg><div class="a" style="left:80.0px;top:0.4px;font-size:20px;line-height:20px;color:#fff;font-weight:bold;font-style:italic;">StatiCa</div><div class="a" style="left:152px;top:0px;font-size:7px;line-height:8px;color:#ccc">&#174;</div><div class="a" style="left:176.0px;top:1.5px;font-size:17.4px;line-height:17.4px;color:#fff;font-weight:bold;font-style:italic;">Member</div><div class="a" style="left:9.0px;top:28.7px;font-size:9px;line-height:9px;color:#fff;font-weight:bold;font-style:italic;">Calculate yesterday&#8217;s estimates</div><svg class="a" style="left:13px;top:156px;overflow:visible" width="20" height="19" viewBox="0 0 20 19" ><path d="M2,9.5 L10,1.5 L18,9.5 M4,8 V18 H8 V12 H12 V18 H16 V8" fill="none" stroke="#fff" stroke-width="2" stroke-linejoin="miter"/></svg><svg class="a" style="left:50px;top:155px;overflow:visible" width="21" height="20" viewBox="0 0 21 20" ><rect x="1" y="1" width="12" height="11" fill="none" stroke="#fff" stroke-width="1.6"/><circle cx="12.5" cy="12.5" r="4.5" fill="#999" stroke="#fff" stroke-width="1.8"/><path d="M16,16 L20,20" stroke="#fff" stroke-width="1.8"/><path d="M12.5,10 V12.5 H10.5" stroke="#fff" stroke-width="1" fill="none"/></svg><svg class="a" style="left:86px;top:157px;overflow:visible" width="20" height="19" viewBox="0 0 20 19" ><circle cx="8" cy="8" r="6.5" fill="none" stroke="#fff" stroke-width="2.2"/><path d="M12.5,12.5 L19,18.5" stroke="#fff" stroke-width="2.6"/></svg><svg class="a" style="left:121px;top:155px;overflow:visible" width="21" height="21" viewBox="0 0 21 21" ><path d="M10.5,3 V18 M3,10.5 H18" stroke="#fff" stroke-width="2.2"/><path d="M10.5,0 L14.5,4.5 H6.5 Z M10.5,21 L14.5,16.5 H6.5 Z M0,10.5 L4.5,6.5 V14.5 Z M21,10.5 L16.5,6.5 V14.5 Z" fill="#fff"/></svg><svg class="a" style="left:159px;top:158px;overflow:visible" width="18" height="18" viewBox="0 0 18 18" ><path d="M14,5 A7,7 0 1 0 15.2,12" fill="none" stroke="#fff" stroke-width="2.3"/><path d="M16.5,0.5 V8 H9 Z" fill="#fff"/></svg><svg class="a" style="left:192px;top:156px;overflow:visible" width="21" height="20" viewBox="0 0 21 20" ><path d="M1.5,1.5 L6,6 M1.5,1.5 H5 M1.5,1.5 V5 M19.5,1.5 L15,6 M19.5,1.5 H16 M19.5,1.5 V5 M1.5,18.5 L6,14 M1.5,18.5 H5 M1.5,18.5 V15 M19.5,18.5 L15,14 M19.5,18.5 H16 M19.5,18.5 V15" stroke="#fff" stroke-width="1.6" fill="none"/></svg><svg class="a" style="left:226px;top:159px;overflow:visible" width="22" height="15" viewBox="0 0 22 15" ><path d="M1,5 L14,1 L21,3 L8,7 Z" fill="#fff"/><path d="M1,5 L8,7 V14 L1,12 Z" fill="#e8e8e8"/><path d="M8,7 L21,3 V10 L8,14 Z" fill="#f4f4f4"/><path d="M8,7 V14" stroke="#999" stroke-width="0.6"/></svg><div class="a" style="left:969.5px;width:200px;text-align:center;top:159.1px;font-size:12px;line-height:12px;color:#fff;">Solid</div><div class="a" style="left:1027.5px;width:200px;text-align:center;top:159.1px;font-size:12px;line-height:12px;color:#fff;">Transparent</div><div class="a" style="left:1103.5px;width:200px;text-align:center;top:159.1px;font-size:12px;line-height:12px;color:#fff;">Wireframe</div><div class="a" style="left:4.7px;top:189.7px;font-size:12px;line-height:12px;color:#111;transform:scaleX(0.997);transform-origin:0 0;">MNA</div><div class="a" style="left:4.7px;top:205.7px;font-size:12px;line-height:12px;color:#111;transform:scaleX(0.971);transform-origin:0 0;">MNA Plates</div><div class="a" style="left:4.7px;top:221.7px;font-size:12px;line-height:12px;color:#111;transform:scaleX(0.838);transform-origin:0 0;">LBA</div><div class="a" style="left:102.6px;top:189.7px;font-size:12px;line-height:12px;color:#111;transform:scaleX(0.920);transform-origin:0 0;">100.0 %</div><div class="a" style="left:102.6px;top:205.7px;font-size:12px;line-height:12px;color:#111;transform:scaleX(0.944);transform-origin:0 0;">1.1 &lt; 5.0 %</div><div class="a" style="left:102.6px;top:221.7px;font-size:12px;line-height:12px;color:#111;transform:scaleX(0.873);transform-origin:0 0;">2.27</div><svg class="a" style="left:76px;top:188px;overflow:visible" width="16" height="15" viewBox="0 0 16 15" ><path d="M1.5,8 L6,12.5 L14.5,2" fill="none" stroke="#6fbf73" stroke-width="3.2"/></svg><svg class="a" style="left:76px;top:204px;overflow:visible" width="16" height="15" viewBox="0 0 16 15" ><path d="M1.5,8 L6,12.5 L14.5,2" fill="none" stroke="#6fbf73" stroke-width="3.2"/></svg><div class="a" style="left:854.6px;width:300px;text-align:right;top:319.7px;font-size:14.5px;line-height:14.5px;color:#111;">Usum</div><div class="a" style="left:854.8px;width:300px;text-align:right;top:337.7px;font-size:14.5px;line-height:14.5px;color:#111;">[mm]</div><div class="a" style="left:816.2px;width:300px;text-align:right;top:369.3px;font-size:11.5px;line-height:11.5px;color:#111;">0.0</div><div class="a" style="left:816.2px;width:300px;text-align:right;top:672.3px;font-size:11.5px;line-height:11.5px;color:#111;">0.0</div><svg class="a" style="left:1123px;top:382px;overflow:visible" width="34" height="290" viewBox="0 0 34 290" ><rect x="8" y="0.00" width="25" height="14.75" fill="#b00000"/><rect x="8" y="14.45" width="25" height="14.75" fill="#e00000"/><rect x="8" y="28.90" width="25" height="14.75" fill="#ff0000"/><rect x="8" y="43.35" width="25" height="14.75" fill="#ff4000"/><rect x="8" y="57.80" width="25" height="14.75" fill="#ff7800"/><rect x="8" y="72.25" width="25" height="14.75" fill="#ffa500"/><rect x="8" y="86.70" width="25" height="14.75" fill="#ffc800"/><rect x="8" y="101.15" width="25" height="14.75" fill="#ffe600"/><rect x="8" y="115.60" width="25" height="14.75" fill="#dce600"/><rect x="8" y="130.05" width="25" height="14.75" fill="#82b000"/><rect x="8" y="144.50" width="25" height="14.75" fill="#2a7a0a"/><rect x="8" y="158.95" width="25" height="14.75" fill="#007a30"/><rect x="8" y="173.40" width="25" height="14.75" fill="#00b48c"/><rect x="8" y="187.85" width="25" height="14.75" fill="#00e6e0"/><rect x="8" y="202.30" width="25" height="14.75" fill="#00c0ff"/><rect x="8" y="216.75" width="25" height="14.75" fill="#0070ff"/><rect x="8" y="231.20" width="25" height="14.75" fill="#0000ff"/><rect x="8" y="245.65" width="25" height="14.75" fill="#2000d0"/><rect x="8" y="260.10" width="25" height="14.75" fill="#3000a8"/><rect x="8" y="274.55" width="25" height="14.75" fill="#4a0080"/><rect x="8" y="0" width="25" height="289" fill="none" stroke="#222" stroke-width="1"/><path d="M0.5,0 H8 M0.5,289 H8" stroke="#555" stroke-width="1"/></svg><svg class="a" style="left:1149px;top:209px;overflow:visible" width="90" height="80" viewBox="0 0 90 80" ><ellipse cx="40.5" cy="48.5" rx="36.5" ry="18.5" fill="none" stroke="#dcdcdc" stroke-width="9"/><polygon points="13.3,7.4 47.1,0.2 65.6,13.0 65.0,47.4 28.7,59.2 18.9,38.2" fill="#acacac"/><polygon points="13.3,7.4 47.1,0.2 65.6,13.0 24.6,24.3" fill="#b4b4b4"/><path d="M13.3,7.4 L47.1,0.2 M47.1,0.2 L65.6,13.0 M65.6,13.0 L24.6,24.3 M24.6,24.3 L13.3,7.4 M13.3,7.4 L18.9,38.2 M24.6,24.3 L28.7,59.2 M65.6,13.0 L65.0,47.4 M47.1,0.2 L48.7,30.0 M18.9,38.2 L48.7,30.0 M48.7,30.0 L65.0,47.4 M18.9,38.2 L28.7,59.2 M28.7,59.2 L65.0,47.4" stroke="#777" stroke-width="1" fill="none"/><path d="M33.0,11.0 L41.0,11.0 M34.0,9.5 L33.0,11.0 L34.0,12.5" stroke="#fff" stroke-width="1.1" fill="none"/><path d="M44.0,40.0 L48.5,34.5 M44.5,34.5 L48.5,40.0 M41.0,38.5 L43.5,38.0" stroke="#fff" stroke-width="1.1" fill="none"/><path d="M20.5,33.5 L21.5,34.5" stroke="#fff" stroke-width="1"/><path d="M-6.0,53.5 L6.0,51.0 M3.5,47.0 L0.0,52.5 L6.0,52.0 M53.0,63.0 L59.0,71.5 L60.5,69.0 M69.0,30.5 L71.0,30.0 M73.0,29.5 L75.5,29.0" stroke="#777" stroke-width="0.9" fill="none"/></svg><div class="a" style="left:1313px;top:156px;width:47px;height:23px;background:#f0f0f0"></div><div class="a" style="left:1186.0px;width:200px;text-align:center;top:161.9px;font-size:12.5px;line-height:12.5px;color:#fff;">MNA</div><div class="a" style="left:1236.5px;width:200px;text-align:center;top:161.9px;font-size:12.5px;line-height:12.5px;color:#f07021;">LBA</div><div class="a" style="left:1275px;top:200px;width:237px;height:34px;background:#f0f0f0"></div><div class="a" style="left:1275px;top:234px;width:237px;height:29px;background:#e1e1e1"></div><svg class="a" style="left:0px;top:0px;overflow:visible" width="1522" height="878" viewBox="0 0 1522 878" ><path d="M1274,199.5 H1513.5 M1274,233.5 H1513.5 M1274,262.6 H1513.5 M1274,291.8 H1513.5 M1274,320.6 H1513.5 M1274,349.7 H1513.5 M1274,378.9 H1513.5 M1274,408 H1513.5 M1275.5,199.5 V408 M1317.5,199.5 V408 M1363.5,199.5 V408 M1410.5,199.5 V408 M1512.5,199.5 V408 " stroke="#a0a0a0" stroke-width="1" fill="none"/><path d="M1274.5,199 V408.5 M1513.5,199 V408.5 M1274,408.5 H1514" stroke="#b8b8b8" stroke-width="1" fill="none"/></svg><div class="a" style="left:1279.5px;top:212.1px;font-size:12px;line-height:12px;color:#333;font-weight:bold;transform:scaleX(0.860);transform-origin:0 0;">Loads</div><div class="a" style="left:1321.6px;top:212.1px;font-size:12px;line-height:12px;color:#333;font-weight:bold;transform:scaleX(0.952);transform-origin:0 0;">Shape</div><div class="a" style="left:1368.5px;top:212.1px;font-size:12px;line-height:12px;color:#333;font-weight:bold;transform:scaleX(0.938);transform-origin:0 0;">Factor</div><div class="a" style="left:1415.0px;top:204.3px;font-size:12px;line-height:12px;color:#333;font-weight:bold;transform:scaleX(1.028);transform-origin:0 0;">Imperfection</div><div class="a" style="left:1415.0px;top:218.8px;font-size:12px;line-height:12px;color:#333;font-weight:bold;transform:scaleX(0.992);transform-origin:0 0;">amplitude [mm]</div><div class="a" style="left:1279.5px;top:242.2px;font-size:12px;line-height:12px;color:#333;">LE1</div><div class="a" style="left:1322.4px;top:242.2px;font-size:12px;line-height:12px;color:#333;">1</div><div class="a" style="left:1368.0px;top:242.2px;font-size:12px;line-height:12px;color:#333;">2.27</div><div class="a" style="left:1415.0px;top:242.2px;font-size:12px;line-height:12px;color:#333;">7</div><div class="a" style="left:1322.4px;top:271.3px;font-size:12px;line-height:12px;color:#333;">2</div><div class="a" style="left:1368.0px;top:271.3px;font-size:12px;line-height:12px;color:#333;">2.80</div><div class="a" style="left:1415.0px;top:271.3px;font-size:12px;line-height:12px;color:#333;">0</div><div class="a" style="left:1322.4px;top:300.3px;font-size:12px;line-height:12px;color:#333;">3</div><div class="a" style="left:1368.0px;top:300.3px;font-size:12px;line-height:12px;color:#333;">2.80</div><div class="a" style="left:1415.0px;top:300.3px;font-size:12px;line-height:12px;color:#333;">0</div><div class="a" style="left:1322.4px;top:329.3px;font-size:12px;line-height:12px;color:#333;">4</div><div class="a" style="left:1368.0px;top:329.3px;font-size:12px;line-height:12px;color:#333;">2.80</div><div class="a" style="left:1415.0px;top:329.3px;font-size:12px;line-height:12px;color:#333;">0</div><div class="a" style="left:1322.4px;top:358.4px;font-size:12px;line-height:12px;color:#333;">5</div><div class="a" style="left:1368.0px;top:358.4px;font-size:12px;line-height:12px;color:#333;">2.80</div><div class="a" style="left:1415.0px;top:358.4px;font-size:12px;line-height:12px;color:#333;">0</div><div class="a" style="left:1322.4px;top:387.6px;font-size:12px;line-height:12px;color:#333;">6</div><div class="a" style="left:1368.0px;top:387.6px;font-size:12px;line-height:12px;color:#333;">2.82</div><div class="a" style="left:1415.0px;top:387.6px;font-size:12px;line-height:12px;color:#333;">0</div><svg class="a" style="left:1400px;top:225px;overflow:visible" width="122" height="50" viewBox="0 0 122 50" ><rect x="10.2" y="8.6" width="101.8" height="29.6" rx="9.5" fill="none" stroke="#f00" stroke-width="3.6"/></svg><div class="a" style="left:1369.3px;width:200px;text-align:center;top:266.2px;font-size:39px;line-height:39px;color:#f00;">1</div>
</body></html>
